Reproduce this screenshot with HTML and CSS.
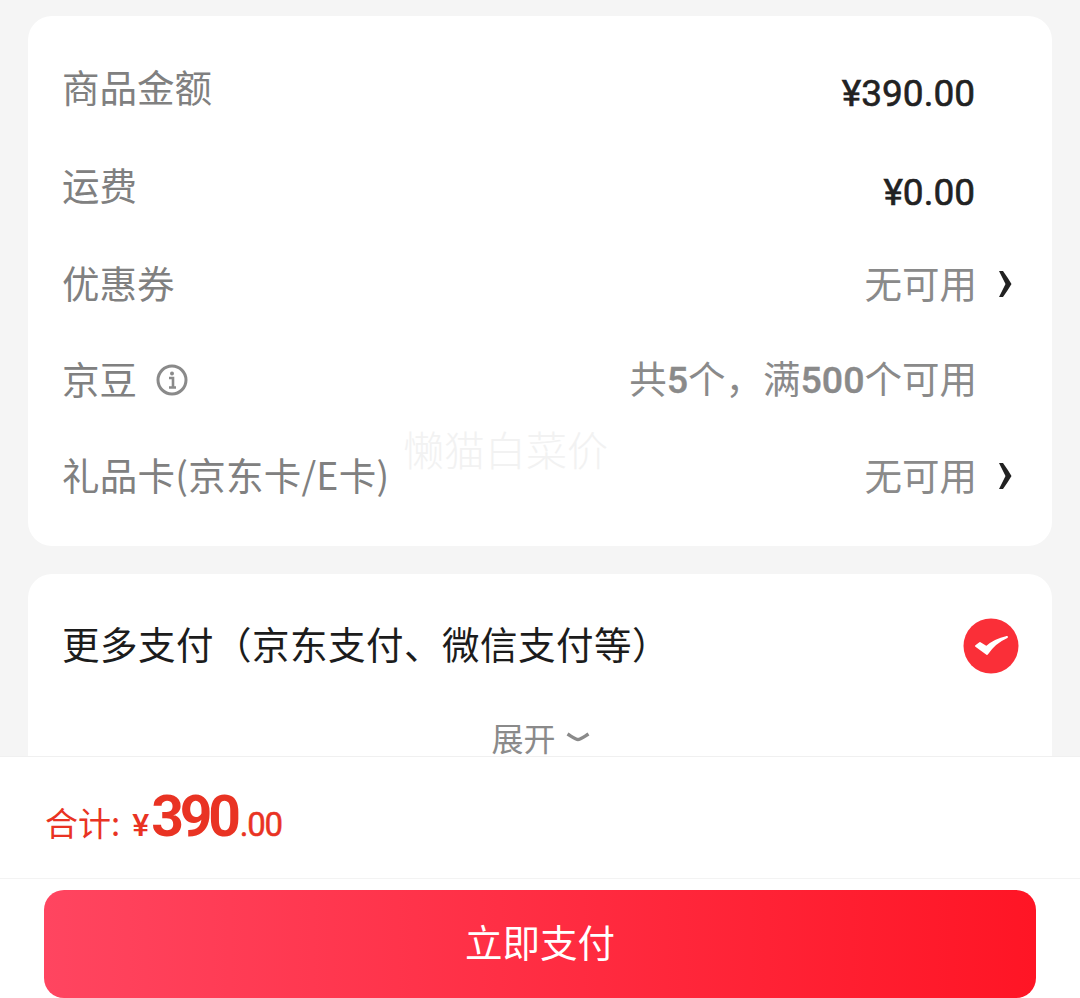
FILE: index.html
```html
<!DOCTYPE html>
<html lang="zh-CN">
<head>
  <meta charset="UTF-8">
  <title>确认支付</title>
  <link rel="stylesheet" href="styles.css">
</head>
<body>

  <div class="content">
    <div class="card amount-card">
      <div class="row row-first">
        <span class="label">商品金额</span>
        <span class="price">¥390.00</span>
      </div>
      <div class="row row-second">
        <span class="label">运费</span>
        <span class="price">¥0.00</span>
      </div>
      <div class="row">
        <span class="label">优惠券</span>
        <span class="value">无可用</span>
        <svg class="arrow" viewBox="0 0 14 28"><path d="M1 1 L5 1 Q10 8 13.500 14 Q10 20 5 27 L1 27 L7.500 14 Z" fill="#222"/></svg>
      </div>
      <div class="row">
        <span class="label">京豆</span>
        <svg class="info" viewBox="0 0 32 32">
          <circle cx="16" cy="16" r="14" fill="none" stroke="#8a8a8a" stroke-width="3"/>
          <circle cx="16" cy="9.5" r="2" fill="#8a8a8a"/>
          <path d="M13 14 H17 V23 M13 23.5 H20" fill="none" stroke="#8a8a8a" stroke-width="2.6"/>
        </svg>
        <span class="value no-arrow">共<b>5</b>个，满<b>500</b>个可用</span>
      </div>
      <div class="row">
        <span class="label label-wide">礼品卡(京东卡/E卡)</span>
        <span class="value">无可用</span>
        <svg class="arrow" viewBox="0 0 14 28"><path d="M1 1 L5 1 Q10 8 13.500 14 Q10 20 5 27 L1 27 L7.500 14 Z" fill="#222"/></svg>
      </div>
      <div class="watermark">懒猫白菜价</div>
    </div>

    <div class="card pay-card">
      <div class="pay-row">
        <span class="pay-name">更多支付（京东支付、微信支付等）</span>
        <svg class="check" viewBox="0 0 56 56">
          <circle cx="28" cy="28" r="27.5" fill="#fa2f38"/>
          <path d="M13 28 L24 36 C29 28 35 23 44 19 C35 21 29 24 23.500 29 L17 25 Z" fill="#fff" stroke="#fff" stroke-width="2" stroke-linejoin="round"/>
        </svg>
      </div>
      <div class="expand">
        展开
        <svg class="expand-arrow" viewBox="0 0 24 10"><path d="M1.500 2 C8 6 10 7.500 12 7.500 C14 7.500 16 6 22.500 2" fill="none" stroke="#8a8a8a" stroke-width="3.400"/></svg>
      </div>
    </div>
  </div>

  <div class="footer">
    <div class="total">
      <span class="total-label">合计:</span>
      <span class="total-yen">¥</span><span class="total-int">390</span><span class="total-dec">.00</span>
    </div>
    <div class="pay-wrap">
      <button class="pay-btn">立即支付</button>
    </div>
  </div>

</body>
</html>
```

FILE: styles.css
```css
* {
  box-sizing: border-box;
}
html, body {
  margin: 0;
  height: 998px;
  overflow: hidden;
}
body {
  display: flex;
  flex-direction: column;
  background: #f5f5f5;
  font-family: "Noto Sans CJK SC", "Noto Sans", sans-serif;
}
.content {
  height: 756px;
  overflow: hidden;
  padding: 16px 28px 0;
}
.card {
  background: #fff;
  border-radius: 24px;
}
.amount-card {
  position: relative;
  height: 530px;
  padding: 23px 34px 0;
  margin-bottom: 28px;
}
.row {
  display: flex;
  align-items: center;
  height: 96px;
}
.row-first {
  height: 97px;
}
.row-second {
  height: 100px;
}
.label {
  padding-bottom: 4px;
  font-size: 37.5px;
  line-height: 50px;
  color: #808080;
}
.label-wide {
  letter-spacing: 0.25px;
}
.price {
  margin-left: auto;
  margin-right: 43px;
  padding-top: 12px;
  font-family: Roboto, sans-serif;
  font-size: 37px;
  color: #222;
  -webkit-text-stroke: 0.6px #222;
}
.value {
  margin-left: auto;
  padding-bottom: 4px;
  font-size: 37.5px;
  line-height: 50px;
  color: #8a8a8a;
}
.value b {
  font-family: Roboto, sans-serif;
  font-weight: 500;
  -webkit-text-stroke: 0.4px #8a8a8a;
}
.no-arrow {
  margin-right: 41px;
}
.arrow {
  width: 14px;
  height: 28px;
  margin-left: 21px;
  margin-right: 6px;
}
.info {
  width: 32px;
  height: 32px;
  margin-left: 19px;
}
.watermark {
  position: absolute;
  left: 375px;
  top: 404px;
  font-size: 41px;
  line-height: 56px;
  font-weight: 300;
  color: #f2f2f2;
}
.pay-card {
  height: 240px;
  padding: 0 33px 0 34px;
}
.pay-row {
  display: flex;
  align-items: center;
  justify-content: space-between;
  height: 143px;
}
.pay-name {
  padding-bottom: 6px;
  font-size: 37.5px;
  letter-spacing: 0.5px;
  color: #1c1c1c;
}
.check {
  width: 56px;
  height: 56px;
}
.expand {
  display: flex;
  justify-content: center;
  align-items: center;
  gap: 10px;
  height: 40px;
  line-height: 40px;
  font-size: 32px;
  color: #8a8a8a;
}
.expand-arrow {
  width: 24px;
  height: 10px;
}
.footer {
  height: 242px;
  background: #fff;
  border-top: 1px solid #f0f0f0;
}
.total {
  display: flex;
  align-items: baseline;
  height: 122px;
  padding: 30px 0 0 45px;
  border-bottom: 1px solid #f3f3f3;
  color: #e93323;
}
.total-label {
  font-size: 33px;
  margin-right: 12px;
}
.total-yen {
  font-family: Roboto, sans-serif;
  font-weight: 500;
  font-size: 32px;
  margin-right: 2px;
}
.total-int {
  font-family: Roboto, sans-serif;
  font-weight: 700;
  font-size: 57px;
  letter-spacing: -4.2px;
  line-height: 60px;
}
.total-dec {
  margin-left: 3px;
  font-family: Roboto, sans-serif;
  font-size: 33px;
  letter-spacing: -1.2px;
  -webkit-text-stroke: 0.5px #e93323;
}
.pay-wrap {
  padding: 11px 44px 0;
}
.pay-btn {
  display: block;
  width: 100%;
  height: 108px;
  padding-bottom: 9px;
  border: none;
  border-radius: 20px;
  background: linear-gradient(90deg, #ff4560, #ff1525);
  color: #fff;
  font-family: inherit;
  font-size: 37.5px;
}
```
